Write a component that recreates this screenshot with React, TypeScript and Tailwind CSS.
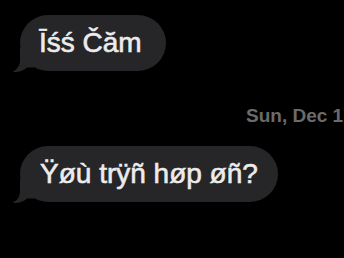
import React from 'react'

const Tail = () => (
  <svg
    className="absolute left-[-8px] bottom-[-1px] w-[24px] h-[24px]"
    viewBox="0 0 24 24"
    fill="#262628"
  >
    <path d="M8 0 L8 12 C8 17.5 5.5 21.5 0.5 23.8 C6.5 24.8 11.5 22.5 15 19.5 L22 19.5 L22 0 Z" />
  </svg>
)

const Bubble = ({ text, className }: { text: string; className?: string }) => (
  <div className={`relative self-start ml-[20px] h-[56px] rounded-[28px] bg-[#262628] flex items-center ${className ?? ''}`}>
    <Tail />
    <span className="relative text-[28px] leading-[56px] text-[#ececec] whitespace-nowrap [-webkit-text-stroke:0.6px_#ececec]">
      {text}
    </span>
  </div>
)

export default function App() {
  return (
    <div
      className="w-[344px] h-[258px] bg-black overflow-hidden flex flex-col pt-[15px]"
      style={{ fontFamily: '"Liberation Sans", Arial, sans-serif' }}
    >
      <Bubble text="Īśś Čăm" className="pl-[19px] pr-[24px]" />

      {/* timestamp runs off the right edge, as in the screenshot */}
      <div className="mt-[35px] pl-[246px] whitespace-nowrap text-[19px] leading-[19px] font-bold text-[#6b6b6b]">
        Sun, Dec 17
      </div>

      <Bubble text="Ÿøù trÿñ høp øñ?" className="mt-[21px] px-[20px]" />
    </div>
  )
}
